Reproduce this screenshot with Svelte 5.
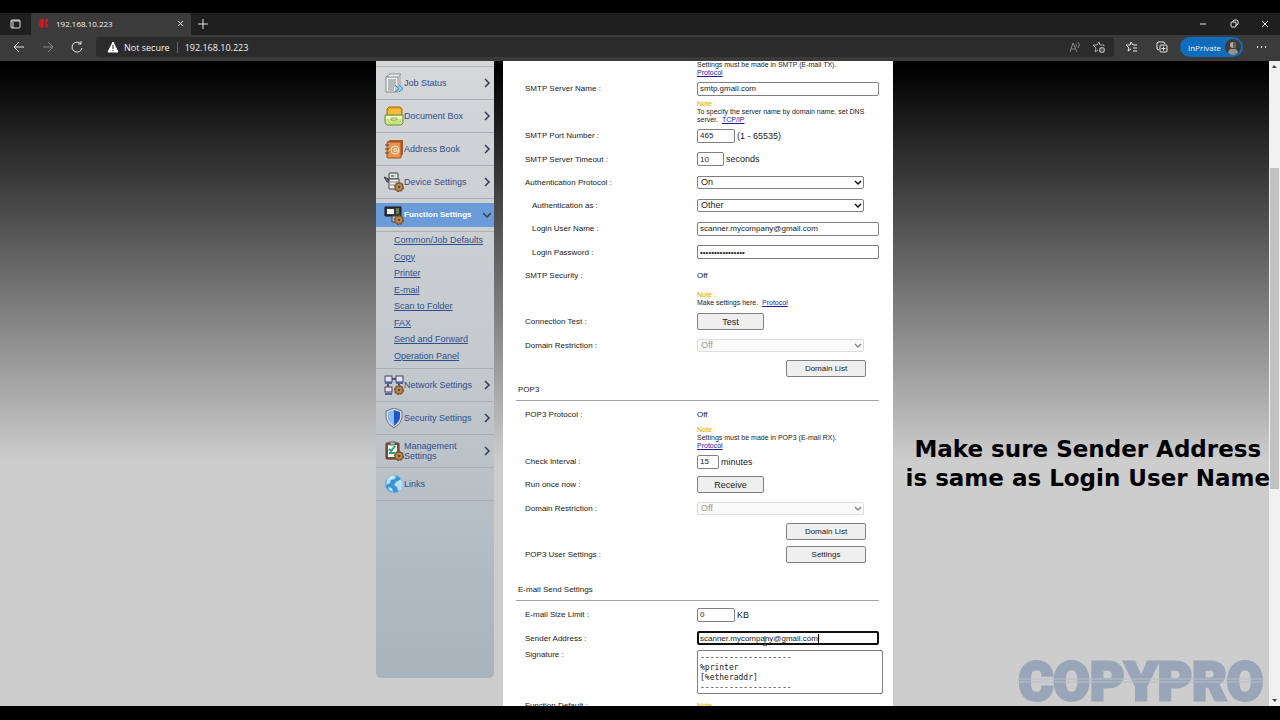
<script lang="ts">
	const mainMenu = [
		{ icon: 'job', title: 'Job Status' },
		{ icon: 'box', title: 'Document Box' },
		{ icon: 'book', title: 'Address Book' },
		{ icon: 'device', title: 'Device Settings' },
		{
			icon: 'function',
			title: 'Function Settings',
			active: true,
			children: ['Common/Job Defaults', 'Copy', 'Printer', 'E-mail', 'Scan to Folder', 'FAX', 'Send and Forward', 'Operation Panel']
		},
		{ icon: 'network', title: 'Network Settings' },
		{ icon: 'security', title: 'Security Settings' },
		{ icon: 'management', title: 'Management Settings' },
		{ icon: 'links', title: 'Links', plain: true }
	];

	const signature = '-------------------\n%printer\n[%etheraddr]\n-------------------';
</script>

{#snippet gear()}
	<circle cx="15" cy="15" r="4" fill="#a87543" stroke="#76502c" stroke-width="2" stroke-dasharray="2 1" />
	<circle cx="15" cy="15" r="4" fill="#b5834f" stroke="#80572f" />
	<circle cx="15" cy="15" r="1" fill="#4b331e" />
{/snippet}

{#snippet menuIcon(name)}
	<svg class="menuIcon" viewBox="0 0 20 20" aria-hidden="true">
		{#if name === 'job'}
			<path d="M2 4 6 1h11l-3 3v15H2z" fill="#f4f4f4" stroke="#85898c" />
			<path d="M14 4l3-3v14l-3 3z" fill="#b9bdbf" />
			<path d="M2 4h12M4 7h8M4 9h8M4 11h8M4 13h8M4 15h6M4 17h6" stroke="#777c80" />
			<path d="M11 12l4 3.500-4 3.500M15 12l4 3.500-4 3.500" fill="#8fd0f5" stroke="#258bd0" />
		{:else if name === 'box'}
			<path d="M3 9V3l2-2h11l2 2v6z" fill="#f0a51e" stroke="#a96b14" />
			<path d="M5 4h11M4 6h13M4 8h13" stroke="#ffd35b" />
			<path d="M1 9h18v8l-2 2H3l-2-2z" fill="#c7e67b" stroke="#6f913b" />
			<path d="M2 10h16v3H2z" fill="#eef9c9" />
			<rect x="7" y="12" width="6" height="2" rx="1" fill="#fff" stroke="#829e4c" />
		{:else if name === 'book'}
			<path d="M3 3l3-2h13v14l-3 4H3z" fill="#a75a25" />
			<rect x="3" y="3" width="14" height="16" rx="1" fill="#ea914b" stroke="#9c5422" />
			<path d="M1 6h4M1 10h4M1 14h4" stroke="#574334" />
			<circle cx="11" cy="11" r="4" fill="none" stroke="#fff1e0" />
			<circle cx="11" cy="11" r="1.500" fill="none" stroke="#fff1e0" />
			<path d="M12.500 10v2q1 1 2-1" fill="none" stroke="#fff1e0" />
		{:else if name === 'device'}
			<path d="M0 5l5 2v3H3z" fill="#6a6f72" stroke="#414547" />
			<rect x="5" y="1" width="9" height="6" rx="1" fill="#dce3e0" stroke="#373d3e" />
			<rect x="7" y="3" width="3" height="2" fill="#64a368" />
			<path d="M5 7h10v10H5z" fill="#eceeed" stroke="#45494b" />
			<path d="M6 10h8M6 13h8" stroke="#84898b" />
			{@render gear()}
		{:else if name === 'function'}
			<path d="M1 2h16v9H1z" fill="#333738" stroke="#17191a" />
			<rect x="3" y="4" width="7" height="5" fill="#f7f7ef" />
			<path d="M12 4h3M12 6h3M12 8h3" stroke="#9dc46a" />
			<path d="M8 11h9v6H8z" fill="#b7babb" stroke="#45494b" />
			{@render gear()}
		{:else if name === 'network'}
			<path d="M4 6v9M15 6v6M7 4h6" stroke="#4d596d" stroke-width="2" />
			<rect x="1" y="1" width="7" height="6" fill="#e9dff7" stroke="#3d4563" />
			<rect x="12" y="1" width="7" height="6" fill="#e9dff7" stroke="#3d4563" />
			<rect x="1" y="12" width="7" height="5" fill="#f4d6ec" stroke="#3d4563" />
			<path d="M1 8h7M12 8h7M1 19h7" stroke="#4968a0" stroke-width="2" />
			{@render gear()}
		{:else if name === 'security'}
			<path d="M10 0l8 3v7q-1 6-8 10-7-4-8-10V3z" fill="#d9dde2" stroke="#687483" />
			<path d="M10 2v16q-5-4-6-8V4z" fill="#8bbdf2" />
			<path d="M10 2l6 2v6q-1 4-6 8z" fill="#1f57c5" />
		{:else if name === 'management'}
			<rect x="2" y="2" width="13" height="16" rx="1" fill="#895332" stroke="#4b392e" />
			<path d="M4 4h9v12H4z" fill="#f7f8f5" />
			<rect x="6" y="1" width="5" height="3" fill="#b9c0c3" stroke="#596064" />
			<path d="M5 8l2 2 4-5M5 12h6" fill="none" stroke="#27a18c" stroke-width="2" />
			{@render gear()}
		{:else}
			<circle cx="10" cy="10" r="9" fill="#3c94d2" stroke="#8abbdd" />
			<path d="M3 5q4-5 9-3l-1 3-4 1-1 3-4 2zM12 8l5-3 2 5-2 6-3 1-1-4-3-2zM4 13l4 1 1 4-4-2z" fill="#b9dff3" />
			<path d="M6 3l3-1-2 3z" fill="#fff" />
		{/if}
	</svg>
{/snippet}

{#snippet dropDown(id, value, disabled)}
	<span class="selectWrap">
		<select {id} {disabled}><option>{value}</option></select>
		<svg class:faded={disabled} viewBox="0 0 8 6" aria-hidden="true"><path d="M1 1l3 3 3-3" /></svg>
	</span>
{/snippet}

<div class="window">
	<header>
		<div class="tabBar">
			<button class="icon tabMenu" aria-label="Tab actions">
				<svg viewBox="0 0 12 12"><rect x="1" y="2" width="9" height="8" rx="1" /><path d="M1 3h9M3 4v6" /></svg>
			</button>
			<div class="tab">
				<svg class="favicon" viewBox="0 0 10 12" aria-hidden="true"><path d="M1 2h4v9H2L0 8zM6 2l3-1v4L7 6l2 1v4L6 10z" /></svg>
				<span>192.168.10.223</span>
				<button class="icon" aria-label="Close tab"><svg viewBox="0 0 12 12"><path d="M4 4l5 5M9 4l-5 5" /></svg></button>
			</div>
			<button class="icon" aria-label="New tab"><svg viewBox="0 0 12 12"><path d="M6 1v10M1 6h10" /></svg></button>
			<div class="windowButtons">
				<button class="icon" aria-label="Minimize"><svg viewBox="0 0 12 12"><path d="M3 6h6" /></svg></button>
				<button class="icon" aria-label="Restore"><svg viewBox="0 0 12 12"><rect x="3" y="4" width="5" height="5" rx="1" /><path d="M5 4V3l1-1h3l1 1v3L9 7H8" /></svg></button>
				<button class="icon" aria-label="Close"><svg viewBox="0 0 12 12"><path d="M3 3l6 6M9 3l-6 6" /></svg></button>
			</div>
		</div>
		<div class="toolBar">
			<div class="navButtons">
				<button class="icon" aria-label="Back"><svg viewBox="0 0 12 12"><path d="M11 6H1M6 1L1 6l5 5" /></svg></button>
				<button class="icon dim" aria-label="Forward"><svg viewBox="0 0 12 12"><path d="M1 6h10M6 1l5 5-5 5" /></svg></button>
				<button class="icon" aria-label="Refresh"><svg viewBox="0 0 12 12"><path d="M10 3A5 5 0 1 0 11 7M10 0v3H7" /></svg></button>
			</div>
			<div class="address">
				<svg class="warning" viewBox="0 0 12 12" aria-hidden="true"><path d="M6 1l5 10H1z" fill="#fff" stroke="#fff" /><path d="M6 4v4M6 9v1" stroke="#2b2b2b" /></svg>
				<span>Not secure</span>
				<span class="divider"></span>
				<input aria-label="Address" value="192.168.10.223" />
				<button class="icon dim" aria-label="Read aloud"><svg viewBox="0 0 12 12"><path d="M1 11L4 2l4 9M2 8h5M7 3q1 1 0 3M9 1q3 3 0 6" /></svg></button>
				<button class="icon soft" aria-label="Add favorite"><svg viewBox="0 0 12 12"><path d="M5 9l-3 2 1-4-3-3h4l2-3 1 3h4v1" /><circle cx="9" cy="9" r="3" fill="#aaa" stroke="none" /><path d="M9 7v4M7 9h4" stroke="#2b2b2b" /></svg></button>
			</div>
			<div class="actions">
				<button class="icon favorites" aria-label="Favorites"><svg viewBox="0 0 12 12"><path d="M5 8l-3 2 1-3-3-3h4l1-3 2 3h4M7 7h4M7 10h4" /></svg></button>
				<button class="icon" aria-label="Collections"><svg viewBox="0 0 12 12"><path d="M3 9L1 8V2l1-1h6l1 2" /><rect x="4" y="4" width="7" height="7" rx="1" /><path d="M7.500 5.500v4M5.500 7.500h4" /></svg></button>
				<button class="profile">InPrivate
					<svg viewBox="0 0 16 16" aria-hidden="true"><circle cx="8" cy="8" r="8" fill="#3c3a3a" /><circle cx="8" cy="6" r="3" fill="#b5aaa5" /><path d="M8 3a3 3 0 0 1 0 6z" fill="#645d5b" /><path d="M3 14q1-5 5-4 4-1 5 4-5 4-10 0" fill="#969190" /></svg>
				</button>
				<button class="icon" aria-label="More"><svg viewBox="0 0 12 12"><path d="M2 6h1M6 6h1M10 6h1" stroke-width="2" /></svg></button>
			</div>
		</div>
	</header>

	<div class="viewport">
		<div class="page">
			<nav>
				<div class="stub"></div>
				{#each mainMenu as item}
					<div class="item" class:active={item.active}>
						<a href="#menu">
							{@render menuIcon(item.icon)}
							<span>{item.title}</span>
							{#if !item.plain}
								<svg class="arrow" viewBox="0 0 8 10" aria-hidden="true"><path d={item.active ? 'M0 3l4 4 4-4' : 'M2 1l4 4-4 4'} /></svg>
							{/if}
						</a>
					</div>
					{#if item.children}
						<div class="subMenu">
							{#each item.children as child}
								<a href="#sub">{child}</a>
							{/each}
						</div>
					{/if}
				{/each}
			</nav>

			<main>
				<div class="row topNote">
					<p class="note">Settings must be made in SMTP (E-mail TX).<br /><a href="#protocol">Protocol</a></p>
				</div>
				<section class="smtp">
					<div class="row">
						<label for="server">SMTP Server Name :</label>
						<div class="field"><input id="server" value="smtp.gmail.com" /></div>
					</div>
					<div class="row">
						<p class="note"><em>Note :</em><br />To specify the server name by domain name, set DNS server. <a class="inline" href="#tcp">TCP/IP</a></p>
					</div>
					<div class="row">
						<label for="port">SMTP Port Number :</label>
						<div class="field"><input id="port" class="medium" value="465" /> (1 - 65535)</div>
					</div>
					<div class="row">
						<label for="timeout">SMTP Server Timeout :</label>
						<div class="field"><input id="timeout" class="short" value="10" /> seconds</div>
					</div>
					<div class="row">
						<label for="auth">Authentication Protocol :</label>
						<div class="field">{@render dropDown('auth', 'On', false)}</div>
					</div>
					<div class="row">
						<label class="indent" for="authAs">Authentication as :</label>
						<div class="field">{@render dropDown('authAs', 'Other', false)}</div>
					</div>
					<div class="row">
						<label class="indent" for="login">Login User Name :</label>
						<div class="field"><input id="login" value="scanner.mycompany@gmail.com" /></div>
					</div>
					<div class="row">
						<label class="indent" for="password">Login Password :</label>
						<div class="field"><input id="password" type="password" value="abcdefghijklmnop" /></div>
					</div>
					<div class="row">
						<span class="name">SMTP Security :</span>
						<span class="name">Off</span>
					</div>
					<div class="row">
						<p class="note"><em>Note :</em><br />Make settings here. <a class="inline" href="#protocol">Protocol</a></p>
					</div>
					<div class="row">
						<span class="name">Connection Test :</span>
						<div class="field"><button class="test">Test</button></div>
					</div>
					<div class="row">
						<label for="restriction">Domain Restriction :</label>
						<div class="field">{@render dropDown('restriction', 'Off', true)}</div>
					</div>
					<div class="row">
						<div class="field right"><button>Domain List</button></div>
					</div>
				</section>

				<h2>POP3</h2>
				<section class="pop">
					<div class="row">
						<span class="name">POP3 Protocol :</span>
						<span class="name">Off</span>
					</div>
					<div class="row">
						<p class="note"><em>Note :</em><br />Settings must be made in POP3 (E-mail RX).<br /><a href="#protocol">Protocol</a></p>
					</div>
					<div class="row">
						<label for="interval">Check Interval :</label>
						<div class="field"><input id="interval" class="tiny" value="15" /> minutes</div>
					</div>
					<div class="row">
						<span class="name">Run once now :</span>
						<div class="field"><button class="test">Receive</button></div>
					</div>
					<div class="row">
						<label for="popRestriction">Domain Restriction :</label>
						<div class="field">{@render dropDown('popRestriction', 'Off', true)}</div>
					</div>
					<div class="row">
						<div class="field right"><button>Domain List</button></div>
					</div>
					<div class="row">
						<span class="name">POP3 User Settings :</span>
						<div class="field right"><button>Settings</button></div>
					</div>
				</section>

				<h2 class="spaced">E-mail Send Settings</h2>
				<section class="send">
					<div class="row">
						<label for="size">E-mail Size Limit :</label>
						<div class="field"><input id="size" class="medium" value="0" /> KB</div>
					</div>
					<div class="row">
						<label for="sender">Sender Address :</label>
						<div class="field sender">
							<input id="sender" class="focused" value="scanner.mycompany@gmail.com" />
							<span class="caret"></span>
							<svg class="pointer" viewBox="0 0 7 12" aria-hidden="true"><path d="M3 1v9M1 11l2-1 2 1" /></svg>
						</div>
					</div>
				</section>
				<div class="row signature">
					<label for="signature">Signature :</label>
					<textarea id="signature" value={signature}></textarea>
				</div>
				<div class="row last">
					<span class="name">Function Default :</span>
					<p class="note"><em>Note .</em></p>
				</div>
			</main>
		</div>

		<div class="scrollBar">
			<svg viewBox="0 0 11 11" aria-hidden="true"><path d="M3 7l2-3 3 3z" /></svg>
			<div class="before"></div>
			<div class="thumb"></div>
			<div class="after"></div>
			<svg viewBox="0 0 11 11" aria-hidden="true"><path d="M3 4l3 3 2-3z" /></svg>
		</div>

		<p class="caption">Make sure Sender Address<br />is same as Login User Name</p>
		<svg class="logo" viewBox="0 0 248 56" role="img" aria-label="COPYPRO">
			<text x="124" y="50">COPYPRO</text>
			<path d="M0 29h248M0 32h248" />
		</svg>
	</div>
</div>

<style>
	:global(body) {
		background: #000;
	}
	.window {
		box-sizing: border-box;
		height: 100vh;
		padding: 13px 0 14px;
		display: flex;
		flex-direction: column;
		overflow: hidden;
		font-family: "Liberation Sans", Arial, sans-serif;
		color: #222;
	}
	p, h2 {
		margin: 0;
	}
	input, select, button, textarea {
		box-sizing: border-box;
		margin: 0;
		font-family: inherit;
		color: inherit;
	}

	/* browser frame */
	header {
		font-family: "Open Sans", sans-serif;
		font-size: 9px;
		color: #f2f2f2;
	}
	.tabBar, .tab, .toolBar, .address, .actions, .windowButtons, .navButtons {
		display: flex;
		align-items: center;
	}
	.tabBar {
		height: 22px;
		background: #1f1f1f;
	}
	.tab {
		box-sizing: border-box;
		width: 160px;
		height: 22px;
		margin-right: 6px;
		padding: 0 5px 2px 8px;
		gap: 7px;
		background: #3b3b3b;
		border-radius: 3px 3px 0 0;
		font-size: 8px;
	}
	.tab span {
		flex: 1;
	}
	.favicon {
		width: 10px;
		height: 12px;
		fill: #d3141b;
	}
	.icon {
		display: flex;
		padding: 0;
		border: 0;
		background: none;
	}
	.icon svg {
		width: 12px;
		height: 12px;
		fill: none;
		stroke: #e6e6e6;
	}
	.icon.dim svg {
		stroke: #858585;
	}
	.icon.soft svg {
		stroke: #aaa;
	}
	.tabMenu {
		margin: 0 9px 0 10px;
	}
	.windowButtons {
		margin-left: auto;
		padding-right: 9px;
		gap: 19px;
	}
	.toolBar {
		box-sizing: border-box;
		height: 26px;
		padding-bottom: 2px;
		background: #3b3b3b;
	}
	.navButtons {
		width: 96px;
		padding-left: 13px;
		box-sizing: border-box;
		gap: 17px;
	}
	.address {
		flex: 1;
		height: 20px;
		padding: 0 9px 0 11px;
		box-sizing: border-box;
		background: #2b2b2b;
		border-radius: 3px;
	}
	.address span {
		margin-left: 5px;
	}
	.address .divider {
		width: 1px;
		height: 11px;
		margin: 0 7px;
		background: #666;
	}
	.address input {
		flex: 1;
		padding: 0;
		border: 0;
		background: none;
		font-size: 9px;
	}
	.address .icon {
		margin-left: 12px;
	}
	.warning {
		width: 12px;
		height: 12px;
	}
	.actions {
		padding: 0 13px 0 12px;
		gap: 12px;
	}
	.favorites {
		margin-right: 6px;
	}
	.profile {
		display: flex;
		align-items: center;
		justify-content: flex-end;
		gap: 4px;
		width: 63px;
		height: 20px;
		padding: 0 2px;
		border: 0;
		border-radius: 10px;
		background: #0f6cbd;
		font-size: 8px;
	}
	.profile svg {
		width: 16px;
		height: 16px;
	}

	/* page */
	.viewport {
		position: relative;
		flex: 1;
		min-height: 0;
		display: flex;
	}
	.page {
		flex: 1;
		min-width: 0;
		display: flex;
		justify-content: center;
		gap: 9px;
		overflow: hidden;
		background: linear-gradient(#000 1%, #cdcdcd 62%);
	}
	nav {
		width: 118px;
		margin-bottom: 28px;
		border-radius: 0 0 5px 5px;
		background: linear-gradient(#d5d7d9, #c3c9cd 50%, #a8b3bc);
		font-size: 9px;
	}
	nav a {
		color: #2e4f8f;
	}
	.stub {
		height: 5px;
		border-bottom: 1px solid #b3b7ba;
	}
	.item {
		box-sizing: border-box;
		height: 33px;
		padding: 4px 0;
		border-bottom: 1px solid #a9b0b5;
	}
	.item a {
		display: flex;
		align-items: center;
		height: 24px;
		padding: 0 3px 0 8px;
		text-decoration: none;
		line-height: 10px;
	}
	.item span {
		flex: 1;
	}
	.item.active a {
		background: #6c9bd9;
		color: #fff;
		font-size: 8px;
		font-weight: bold;
	}
	.menuIcon {
		width: 20px;
		height: 20px;
	}
	.arrow {
		width: 8px;
		height: 10px;
		fill: none;
		stroke: #343c46;
		stroke-width: 1.5;
	}
	.subMenu {
		box-sizing: border-box;
		height: 137px;
		padding: 0 0 4px 18px;
		display: flex;
		flex-direction: column;
		align-items: flex-start;
		justify-content: space-between;
		border-bottom: 1px solid #a9b0b5;
		line-height: 16px;
	}

	main {
		box-sizing: border-box;
		width: 390px;
		padding: 0 14px 0 13px;
		background: #fff;
		font-size: 9px;
	}
	section {
		display: grid;
		grid-auto-rows: 1fr;
	}
	.smtp {
		height: 303px;
	}
	.pop {
		height: 163px;
	}
	.send {
		height: 47px;
	}
	.row {
		display: grid;
		grid-template-columns: 172px 182px;
		align-items: center;
		padding-left: 9px;
	}
	.topNote {
		height: 16px;
	}
	label, .name {
		font-size: 8px;
	}
	.indent {
		padding-left: 7px;
	}
	.note {
		grid-column: 2;
		font-size: 7px;
		line-height: 8px;
	}
	.note em {
		font-style: normal;
		color: #d9a400;
	}
	.note a {
		color: #1a1aa6;
	}
	.note .inline {
		margin-left: 2px;
	}
	h2 {
		box-sizing: border-box;
		height: 21px;
		margin-bottom: 2px;
		padding-left: 2px;
		border-bottom: 1px solid #a5a5a5;
		font-size: 8px;
		font-weight: normal;
		line-height: 20px;
	}
	h2.spaced {
		margin-top: 14px;
	}
	.field {
		grid-column: 2;
		display: flex;
		align-items: center;
		gap: 2px;
	}
	.field.right {
		justify-content: flex-end;
		padding-right: 13px;
	}
	.field input {
		width: 182px;
		height: 14px;
		padding: 0 2px;
		border: 1px solid #808080;
		border-radius: 2px;
		background: #fff;
		font-size: 8px;
	}
	.field input.medium {
		width: 38px;
	}
	.field input.short {
		width: 27px;
	}
	.field input.tiny {
		width: 22px;
	}
	.field input.focused {
		padding: 0 1px;
		border: 2px solid #101010;
	}
	.field button {
		width: 80px;
		height: 17px;
		padding: 0;
		border: 1px solid #808080;
		border-radius: 2px;
		background: #efefef;
		font-size: 8px;
	}
	.field button.test {
		width: 67px;
		font-size: 9px;
	}
	.selectWrap {
		position: relative;
		display: flex;
	}
	select {
		width: 167px;
		height: 13px;
		padding: 0 3px;
		appearance: none;
		border: 1px solid #808080;
		border-radius: 2px;
		background: #fff;
		font-size: 9px;
		line-height: 11px;
	}
	select:disabled {
		border-color: #ddd;
		background: #fafafa;
		color: #999;
		opacity: 1;
	}
	.selectWrap svg {
		position: absolute;
		right: 2px;
		top: 4px;
		width: 8px;
		height: 6px;
		fill: none;
		stroke: #111;
		stroke-width: 1.5;
		pointer-events: none;
	}
	.selectWrap svg.faded {
		stroke: #888;
	}
	.sender {
		position: relative;
	}
	.caret {
		position: absolute;
		left: 121px;
		top: 3px;
		width: 1px;
		height: 9px;
		background: #000;
	}
	.pointer {
		position: absolute;
		left: 65px;
		top: 4px;
		width: 7px;
		height: 12px;
		fill: none;
		stroke: #555;
	}
	.signature {
		align-items: start;
	}
	.signature label {
		line-height: 10px;
	}
	textarea {
		width: 186px;
		height: 44px;
		padding: 2px;
		border: 1px solid #808080;
		border-radius: 2px;
		font-family: "DejaVu Sans Mono", monospace;
		font-size: 8px;
		line-height: 10px;
		resize: none;
		overflow: hidden;
	}
	.last {
		height: 23px;
	}

	.scrollBar {
		width: 11px;
		display: flex;
		flex-direction: column;
		background: #f1f1f1;
	}
	.scrollBar svg {
		width: 11px;
		height: 11px;
		fill: #444;
	}
	.before {
		flex: 96;
	}
	.thumb {
		flex: 321;
		margin: 0 1px;
		background: #c1c1c1;
	}
	.after {
		flex: 206;
	}

	/* text laid over the page */
	.caption {
		position: absolute;
		right: 10px;
		top: 374px;
		font: bold 23px/29px "DejaVu Sans", Verdana, sans-serif;
		color: #000;
		text-align: center;
		white-space: nowrap;
	}
	.logo {
		position: absolute;
		right: 15px;
		bottom: 0;
		width: 248px;
		height: 56px;
	}
	.logo text {
		font-family: Roboto, "Liberation Sans", sans-serif;
		font-size: 53px;
		font-weight: 900;
		text-anchor: middle;
		fill: #99a5b8;
		stroke: #99a5b8;
		stroke-width: 3;
	}
	.logo path {
		stroke: #b8bfc9;
	}
</style>
